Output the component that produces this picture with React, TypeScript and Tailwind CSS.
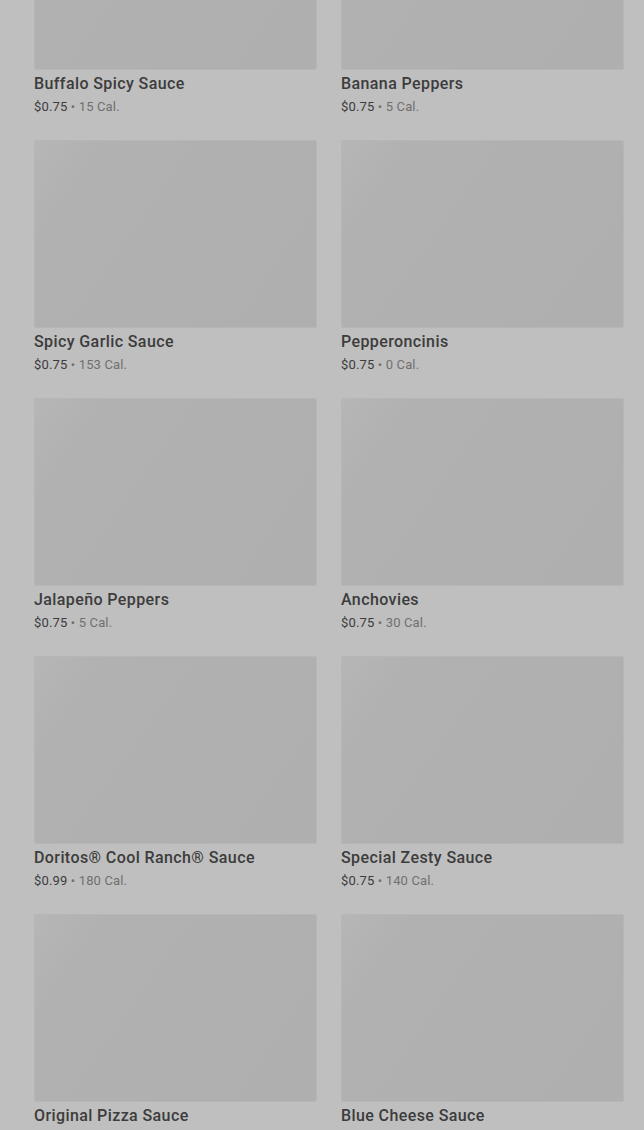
import React from 'react';

interface Item {
  name: string;
  price: string;
  cal: string;
}

const items: Item[] = [
  { name: 'Buffalo Spicy Sauce', price: '$0.75', cal: '15 Cal.' },
  { name: 'Banana Peppers', price: '$0.75', cal: '5 Cal.' },
  { name: 'Spicy Garlic Sauce', price: '$0.75', cal: '153 Cal.' },
  { name: 'Pepperoncinis', price: '$0.75', cal: '0 Cal.' },
  { name: 'Jalapeño Peppers', price: '$0.75', cal: '5 Cal.' },
  { name: 'Anchovies', price: '$0.75', cal: '30 Cal.' },
  { name: 'Doritos® Cool Ranch® Sauce', price: '$0.99', cal: '180 Cal.' },
  { name: 'Special Zesty Sauce', price: '$0.75', cal: '140 Cal.' },
  { name: 'Original Pizza Sauce', price: '$0.75', cal: '45 Cal.' },
  { name: 'Blue Cheese Sauce', price: '$0.75', cal: '110 Cal.' },
];

const ItemCard: React.FC<{ item: Item }> = ({ item }) => {
  return (
    <div className="flex flex-col">
      {/* Image placeholder */}
      <div className="h-[188px] rounded-[2px] border border-[#b6b6b6] bg-[linear-gradient(125deg,#b6b6b6_0%,#b1b1b1_18%,#afafaf_100%)]" />
      <div className="mt-[4px] text-[16px] leading-[20px] font-medium tracking-[0.4px] text-[#3c3c3c]">
        {item.name}
      </div>
      <div className="mt-[4px] text-[13px] leading-[18px] tracking-[0.15px] text-[#3c3c3c]">
        {item.price}
        <span className="text-[#707070]"> • {item.cal}</span>
      </div>
    </div>
  );
};

export default function App() {
  return (
    <div className="h-[1130px] overflow-hidden bg-[#bfbfbf] font-['Roboto',sans-serif]">
      <div className="mt-[-118px] grid grid-cols-2 gap-x-6 gap-y-[24px] pl-[34px] pr-[20px]">
        {items.map((item) => (
          <ItemCard key={item.name} item={item} />
        ))}
      </div>
    </div>
  );
}
